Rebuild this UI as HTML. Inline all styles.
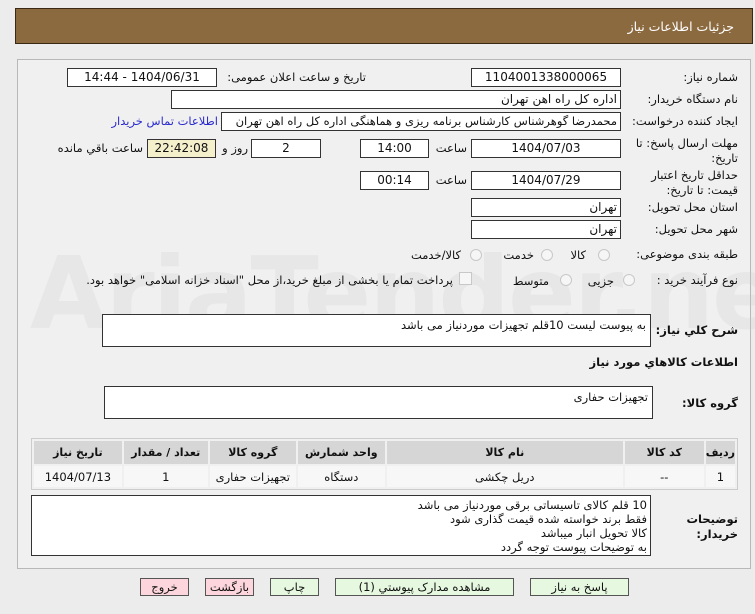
<!DOCTYPE html>
<html><head><meta charset="utf-8"><style>
*{box-sizing:border-box;margin:0;padding:0}
body{width:755px;height:614px;background:#ececec;font-family:"DejaVu Sans",sans-serif;font-size:11.5px;color:#111;position:relative;overflow:hidden}
.a{position:absolute;white-space:nowrap}
.hdr{left:15px;top:8px;width:738px;height:36px;background:#8c6a40;border:1px solid #3a2a15}
.hdr span{position:absolute;right:18px;top:10px;color:#fff;font-size:12.5px}
.panel{left:17px;top:59px;width:734px;height:510px;background:#f0f0f0;border:1px solid #b8b8b8}
.box{position:absolute;background:#fff;border:1px solid #333;height:19px;line-height:17px;font-size:12px;direction:rtl;padding:0 3px;white-space:nowrap;overflow:hidden}
.c{text-align:center}
.lbl{position:absolute;direction:rtl;text-align:right;white-space:nowrap;font-size:11.5px}
.ta{position:absolute;background:#fff;border:1px solid #333;direction:rtl;padding:3px 4px;font-size:11.5px}
.rad{position:absolute;width:12px;height:12px;border-radius:50%;border:1px solid #c8c8c8;background:#f6f6f6}
table{border-collapse:separate;border-spacing:2px;position:absolute;left:31px;top:438px;width:707px;background:#f0f0f0;border:1px solid #ccc;direction:rtl}
th{background:#d6d6d6;height:23px;font-size:11px;font-weight:bold}
td{background:#f7f7f7;height:21px;text-align:center;font-size:11.5px}
.btn{position:absolute;top:578px;height:18px;border:1px solid #555;text-align:center;line-height:16px;font-size:11.5px;background:#e6f8e0}
.pk{background:#fcd6dc}
</style></head><body>
<div class="a hdr"><span>جزئیات اطلاعات نیاز</span></div>
<div class="a panel"></div>
<div class="a" style="left:30px;top:235px;font-size:100px;color:rgba(200,200,200,0.22);font-weight:bold;letter-spacing:-2px">AriaTender.net</div>

<div class="lbl" style="right:17px;top:70px">شماره نیاز:</div>
<div class="box c" style="left:471px;top:68px;width:150px">1104001338000065</div>
<div class="lbl" style="right:389px;top:70px">تاریخ و ساعت اعلان عمومی:</div>
<div class="box c" style="left:67px;top:68px;width:150px">1404/06/31 - 14:44</div>

<div class="lbl" style="right:17px;top:92px">نام دستگاه خریدار:</div>
<div class="box" style="left:171px;top:90px;width:450px">اداره کل راه اهن تهران</div>

<div class="lbl" style="right:17px;top:114px">ایجاد کننده درخواست:</div>
<div class="box" style="left:221px;top:112px;width:400px;font-size:11.5px">محمدرضا گوهرشناس کارشناس برنامه ریزی و هماهنگی اداره کل راه اهن تهران</div>
<div class="lbl" style="right:537px;top:114px;color:#2a2ad0">اطلاعات تماس خریدار</div>

<div class="lbl" style="right:17px;top:136px;line-height:15px">مهلت ارسال پاسخ: تا<br>تاریخ:</div>
<div class="box c" style="left:471px;top:139px;width:150px">1404/07/03</div>
<div class="lbl" style="right:288px;top:141px">ساعت</div>
<div class="box c" style="left:360px;top:139px;width:69px">14:00</div>
<div class="box c" style="left:251px;top:139px;width:70px">2</div>
<div class="lbl" style="right:507px;top:141px">روز و</div>
<div class="box c" style="left:147px;top:139px;width:69px;background:#f4f0cc">22:42:08</div>
<div class="lbl" style="right:612px;top:141px">ساعت باقي مانده</div>

<div class="lbl" style="right:17px;top:168px;line-height:15px">حداقل تاریخ اعتبار<br>قیمت: تا تاریخ:</div>
<div class="box c" style="left:471px;top:171px;width:150px">1404/07/29</div>
<div class="lbl" style="right:288px;top:173px">ساعت</div>
<div class="box c" style="left:360px;top:171px;width:69px">00:14</div>

<div class="lbl" style="right:17px;top:200px">استان محل تحویل:</div>
<div class="box" style="left:471px;top:198px;width:150px">تهران</div>
<div class="lbl" style="right:17px;top:222px">شهر محل تحویل:</div>
<div class="box" style="left:471px;top:220px;width:150px">تهران</div>

<div class="lbl" style="right:17px;top:247px">طبقه بندی موضوعی:</div>
<div class="rad" style="left:598px;top:249px"></div><div class="lbl" style="right:169px;top:248px">کالا</div>
<div class="rad" style="left:541px;top:249px"></div><div class="lbl" style="right:221px;top:248px">خدمت</div>
<div class="rad" style="left:470px;top:249px"></div><div class="lbl" style="right:294px;top:248px">کالا/خدمت</div>

<div class="lbl" style="right:17px;top:273px">نوع فرآیند خرید :</div>
<div class="rad" style="left:623px;top:274px"></div><div class="lbl" style="right:141px;top:274px">جزیی</div>
<div class="rad" style="left:560px;top:274px"></div><div class="lbl" style="right:206px;top:274px">متوسط</div>
<div class="a" style="left:459px;top:272px;width:13px;height:13px;border:1px solid #c8c8c8;background:#f6f6f6"></div>
<div class="lbl" style="right:302px;top:273px">پرداخت تمام یا بخشی از مبلغ خرید،از محل "اسناد خزانه اسلامی" خواهد بود.</div>

<div class="lbl" style="right:17px;top:323px;font-weight:bold">شرح كلي نياز:</div>
<div class="ta" style="left:102px;top:314px;width:549px;height:33px">به پیوست لیست 10قلم تجهیزات موردنیاز می باشد</div>
<div class="lbl" style="right:17px;top:355px;font-weight:bold">اطلاعات كالاهاي مورد نياز</div>
<div class="lbl" style="right:17px;top:396px;font-weight:bold">گروه كالا:</div>
<div class="ta" style="left:104px;top:386px;width:549px;height:33px">تجهیزات حفاری</div>

<table>
<tr><th style="width:27px">ردیف</th><th style="width:79px">کد کالا</th><th style="width:236px">نام کالا</th><th style="width:87px">واحد شمارش</th><th style="width:86px">گروه کالا</th><th style="width:84px">تعداد / مقدار</th><th>تاریخ نیاز</th></tr>
<tr><td>1</td><td>--</td><td>دریل چکشی</td><td>دستگاه</td><td>تجهیزات حفاری</td><td>1</td><td>1404/07/13</td></tr>
</table>

<div class="lbl" style="right:17px;top:512px;font-weight:bold;line-height:15px">توضیحات<br>خریدار:</div>
<div class="ta" style="left:31px;top:495px;width:620px;height:61px;line-height:14px;padding:2px 3px">10 قلم کالای تاسیساتی برقی موردنیاز می باشد<br>فقط برند خواسته شده  قیمت گذاری شود<br>کالا تحویل انبار میباشد<br>به توضیحات پیوست توجه گردد</div>

<div class="btn" style="left:530px;width:99px">پاسخ به نیاز</div>
<div class="btn" style="left:335px;width:179px">مشاهده مدارک پیوستي (1)</div>
<div class="btn" style="left:270px;width:49px">چاپ</div>
<div class="btn pk" style="left:205px;width:49px">بازگشت</div>
<div class="btn pk" style="left:140px;width:49px">خروج</div>
</body></html>
